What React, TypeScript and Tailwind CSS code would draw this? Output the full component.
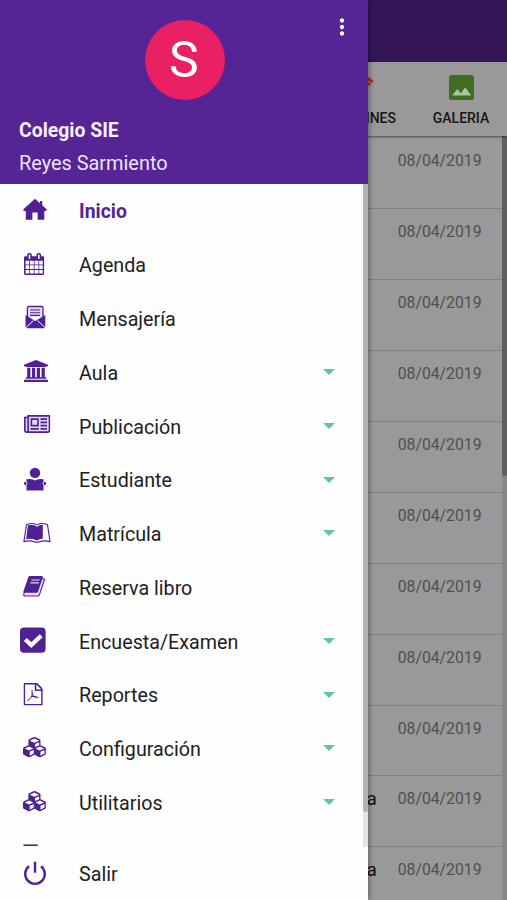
import type { ReactNode } from "react";
import { MdMoreVert } from "react-icons/md";

type IconName =
  | "home"
  | "calendar"
  | "mail"
  | "university"
  | "newspaper"
  | "reader"
  | "openBook"
  | "book"
  | "check"
  | "pdf"
  | "cubes"
  | "file"
  | "power";

type MenuEntry = {
  label: string;
  icon: IconName;
  active?: boolean;
  expandable?: boolean;
};

const menu: MenuEntry[] = [
  { label: "Inicio", icon: "home", active: true },
  { label: "Agenda", icon: "calendar" },
  { label: "Mensajería", icon: "mail" },
  { label: "Aula", icon: "university", expandable: true },
  { label: "Publicación", icon: "newspaper", expandable: true },
  { label: "Estudiante", icon: "reader", expandable: true },
  { label: "Matrícula", icon: "openBook", expandable: true },
  { label: "Reserva libro", icon: "book" },
  { label: "Encuesta/Examen", icon: "check", expandable: true },
  { label: "Reportes", icon: "pdf", expandable: true },
  { label: "Configuración", icon: "cubes", expandable: true },
  { label: "Utilitarios", icon: "cubes", expandable: true },
];

const news = [
  { date: "08/04/2019" },
  { date: "08/04/2019" },
  { date: "08/04/2019" },
  { date: "08/04/2019" },
  { date: "08/04/2019" },
  { date: "08/04/2019" },
  { date: "08/04/2019" },
  { date: "08/04/2019" },
  { date: "08/04/2019" },
  { date: "08/04/2019", tail: "a" },
  { date: "08/04/2019", tail: "a" },
];

const icons: Record<IconName, ReactNode> = {
  home: (
    <path d="M17 3.800l5 4.400V6h2.200v4.200l4.600 4.400-.6 1.400H26.300V24.800h-6.700v-7.300h-5.200v7.300H7.800V16H5.800l-.6-1.400z" />
  ),
  calendar: (
    <svg x="6" y="4" width="20.3" height="22" viewBox="64 0 1664 1792" preserveAspectRatio="none">
      <path d="M192 1664h288v-288h-288v288zm352 0h320v-288h-320v288zm-352-352h288v-320h-288v320zm352 0h320v-320h-320v320zm-352-384h288v-288h-288v288zm736 736h320v-288h-320v288zm-384-736h320v-288h-320v288zm768 736h288v-288h-288v288zm-384-352h320v-320h-320v320zm-352-864v-288q0-13-9.5-22.5t-22.5-9.5h-64q-13 0-22.5 9.5t-9.5 22.5v288q0 13 9.5 22.5t22.5 9.5h64q13 0 22.5-9.5t9.5-22.5zm736 864h288v-320h-288v320zm-384-384h320v-288h-320v288zm384 0h288v-288h-288v288zm32-480v-288q0-13-9.5-22.5t-22.5-9.5h-64q-13 0-22.5 9.5t-9.5 22.5v288q0 13 9.5 22.5t22.5 9.5h64q13 0 22.5-9.5t9.5-22.5zm384-64v1280q0 52-38 90t-90 38h-1408q-52 0-90-38t-38-90v-1280q0-52 38-90t90-38h128v-96q0-66 47-113t113-47h64q66 0 113 47t47 113v96h384v-96q0-66 47-113t113-47h64q66 0 113 47t47 113v96h128q52 0 90 38t38 90z" />
    </svg>
  ),
  mail: (
    <>
      <path d="M9.400 15V6q0-1.500 1.500-1.500h12.600q1.500 0 1.500 1.500v9" fill="#e4daf2" stroke="currentColor" strokeWidth="1.3" />
      <path d="M12 8h10M12 10.700h10M12 13.400h10" stroke="currentColor" strokeWidth="1.1" />
      <path d="M7.500 13l9.800 6 10-6V24.500q0 1.700-1.700 1.700H9.200q-1.700 0-1.700-1.700z" />
      <path d="M8 25.500l7.500-7M27 25.500l-7.500-7" fill="none" stroke="white" strokeWidth="1" />
    </>
  ),
  university: (
    <svg x="6" y="4" width="24" height="22" viewBox="0 0 1920 1792" preserveAspectRatio="none">
      <path d="M960 0l960 384v128h-128q0 26-20.5 45t-48.5 19h-1526q-28 0-48.5-19t-20.5-45h-128v-128zm-704 640h256v768h128v-768h256v768h128v-768h256v768h128v-768h256v768h59q28 0 48.5 19t20.5 45v64h-1664v-64q0-26 20.5-45t48.5-19h59v-768zm1595 960q28 0 48.5 19t20.5 45v128h-1920v-128q0-26 20.5-45t48.5-19h1782z" />
    </svg>
  ),
  newspaper: (
    <>
      <rect x="7" y="6" width="24.500" height="16" fill="#e4daf2" />
      <svg x="6" y="5" width="26.3" height="18" viewBox="0 256 2048 1408" preserveAspectRatio="none">
        <path d="M1024 640h-384v384h384v-384zm128 640v128h-640v-128h640zm0-768v640h-640v-640h640zm640 768v128h-512v-128h512zm0-256v128h-512v-128h512zm0-256v128h-512v-128h512zm0-256v128h-512v-128h512zm-1536 960v-960h-128v960q0 26 19 45t45 19 45-19 19-45zm1664 0v-1088h-1536v1088q0 33-11 64h1483q26 0 45-19t19-45zm128-1216v1216q0 80-56 136t-136 56h-1664q-80 0-136-56t-56-136v-1088h256v-128h1792z" />
      </svg>
    </>
  ),
  reader: (
    <>
      <circle cx="17" cy="8.900" r="5.200" />
      <path d="M8.500 15.200q4.500-.6 8.500 1.200 4-1.800 8.500-1.200v2.300q2.600 0 2.600 1.900t-2.600 2.100v5H8.500v-5q-2.600-.2-2.600-2.100t2.600-1.900z" />
      <path d="M8 17.300q2.200 2 0 4M26 17.300q-2.200 2 0 4" fill="none" stroke="white" strokeWidth=".9" />
    </>
  ),
  openBook: (
    <>
      <path d="M8.500 7.800q5.500-2.600 10.500 0 5-2.600 10.500 0l2.600 16.800q-6.600-1.600-11 .5h-4.200q-4.400-2.100-11-.5z" fill="white" stroke="currentColor" strokeWidth="1.100" strokeLinejoin="round" />
      <path d="M9.800 8.500q4.800-1.700 9.200.9 2.500-1.700 5.800-1.700v13.700q-3.500.2-5.800 2.100-4.600-2.400-10.800-1.300z" />
      <path d="M19 6.500v3.500" stroke="#d9cbea" strokeWidth=".7" />
    </>
  ),
  book: (
    <>
      <path d="M24.500 7.200l2 1.300-5 15.200q-.5 1.300-2 1.300H7.500q-2 0-2-2" fill="#e4daf2" stroke="currentColor" strokeWidth="1.100" strokeLinejoin="round" />
      <path d="M12 5h11.700q1.600 0 1.100 1.600l-4.700 14q-.4 1.200-1.700 1.200H7.600q-1.300 0-1.300 1.300-1.500-1-.9-2.700l4.800-14Q10.600 5 12 5z" />
      <path d="M13.400 9h8.300M12.500 11.800h8.300" stroke="#e9e0f4" strokeWidth="1.200" />
    </>
  ),
  check: (
    <>
      <rect x="2" y="2.600" width="25.600" height="25.200" rx="4" />
      <path d="M7.300 14.500l6 5.600 9.900-9.300" fill="none" stroke="white" strokeWidth="4.200" />
    </>
  ),
  pdf: (
    <>
      <svg x="5.500" y="4" width="19.300" height="22.500" viewBox="128 0 1536 1792" preserveAspectRatio="none">
        <path d="M1596 380q28 28 48 76t20 88v1152q0 40-28 68t-68 28h-1344q-40 0-68-28t-28-68v-1600q0-40 28-68t68-28h896q40 0 88 20t76 48zm-444-244v376h376q-10-29-22-41l-313-313q-12-12-41-22zm384 1528v-1024h-416q-40 0-68-28t-28-68v-416h-768v1536h1280z" />
      </svg>
      <path d="M14 11q.8 5.500-1 7.800l-3.800 3M13.200 17.500q4-.8 7.500 1.200M14 14q.5 3.500 4.500 5" fill="none" stroke="currentColor" strokeWidth="1" />
    </>
  ),
  cubes: (
    <svg x="5" y="5" width="24.200" height="20.500" viewBox="0 0 2304 1792" preserveAspectRatio="none">
      <path d="M640 1632l384-192v-314l-384 164v342zm-64-454l404-173-404-173-404 173zm1088 454l384-192v-314l-384 164v342zm-64-454l404-173-404-173-404 173zm-448-293l384-165v-266l-384 164v267zm-64-379l441-189-441-189-441 189zm1088 518v416q0 36-19 67t-52 47l-448 224q-25 14-57 14t-57-14l-448-224q-5-2-7-4-2 2-7 4l-448 224q-25 14-57 14t-57-14l-448-224q-33-16-52-47t-19-67v-416q0-38 21.5-70t56.5-48l434-186v-400q0-38 21.5-70t56.5-48l448-192q23-10 50-10t50 10l448 192q35 16 56.5 48t21.5 70v400l434 186q36 16 57 48t21 70z" />
    </svg>
  ),
  file: <path d="M5.500 5.200h14.300" fill="none" stroke="currentColor" strokeWidth="1.600" />,
  power: (
    <path d="M11 8.300a9.800 9.800 0 1 0 12 0M17 3.800v10.900" fill="none" stroke="currentColor" strokeWidth="2.400" />
  ),
};

function MenuIcon({ name }: { name: IconName }) {
  return (
    <svg className="h-8 w-9 shrink-0 text-[#4f2192]" viewBox="0 0 36 32" fill="currentColor">
      {icons[name]}
    </svg>
  );
}

function MenuRow({ label, icon, active, expandable }: MenuEntry) {
  return (
    <li className="flex h-[53.75px] shrink-0 items-center pr-7 pl-[18px]">
      <MenuIcon name={icon} />
      <span
        className={
          active
            ? "ml-[25px] pt-0.5 text-[19.4px] font-bold text-[#552494]"
            : "ml-[25px] pt-[3px] text-[19.7px] text-[#212121]"
        }
      >
        {label}
      </span>
      {expandable && (
        <svg className="mr-[5px] ml-auto h-1.5 w-3 text-[#5cc6a2]" viewBox="0 0 12 6" fill="currentColor">
          <path d="M0 0h12L6 6z" />
        </svg>
      )}
    </li>
  );
}

function Drawer() {
  return (
    <aside className="absolute inset-y-0 left-0 flex w-[368px] flex-col bg-[#fefefe] shadow-[1px_0_6px_rgba(0,0,0,0.4)]">
      <header className="relative flex h-[184px] shrink-0 flex-col bg-[#562595] px-[19px] pt-5 text-white">
        <div className="ml-[126px] flex size-[79.5px] items-center justify-center rounded-full bg-[#e92063] text-[50px] leading-none">
          <span className="-ml-0.5">S</span>
        </div>
        <MdMoreVert className="absolute top-[14px] right-[13px] size-[26px]" />
        <div className="mt-[19px] text-[19.4px] leading-6 font-bold text-[#f8effb]">Colegio SIE</div>
        <div className="mt-[9px] text-[19.9px] leading-6 text-[#eee0f7]">Reyes Sarmiento</div>
      </header>
      <div className="flex h-[663px] shrink-0 overflow-hidden">
        <ul className="flex flex-1 flex-col">
          {menu.map((entry) => (
            <MenuRow key={entry.label} {...entry} />
          ))}
          <li className="flex h-[53.75px] shrink-0 items-center pl-[18px]">
            <MenuIcon name="file" />
          </li>
        </ul>
        <div className="-ml-[5px] w-[5px] bg-[#e3e3e3]">
          <div className="h-[628px] rounded-b-sm bg-[#b3b3b3]" />
        </div>
      </div>
      <div className="flex flex-1 items-center pl-[18px]">
        <MenuIcon name="power" />
        <span className="ml-[25px] pt-[3px] text-[19.7px] text-[#212121]">Salir</span>
      </div>
    </aside>
  );
}

export default function App() {
  return (
    <div className="relative flex h-[900px] w-[507px] flex-col overflow-hidden bg-[#999999] font-['Roboto',sans-serif]">
      <div className="h-[62px] shrink-0 bg-[#341659]" />
      <nav className="z-0 flex h-[74px] shrink-0 justify-end bg-[#999999] text-sm font-medium text-[#161616] shadow-[0_1px_2px_rgba(0,0,0,0.5)]">
        <div className="flex w-[100px] flex-col items-end pt-[14px] pr-[19px]">
          <svg className="mr-5 h-6 w-3" viewBox="0 0 12 24">
            <path d="M1 3l4-2 4.500 4-4 5-4.500-3z" fill="#a52e25" />
            <path d="M3 4l4.500 4" stroke="#c7a09b" strokeWidth="1" />
          </svg>
          <span className="mt-2 leading-5">BOLETINES</span>
        </div>
        <div className="flex w-[92px] flex-col items-center pt-[13px]">
          <svg className="size-[25px]" viewBox="0 0 25 25">
            <rect width="25" height="25" rx="2.500" fill="#416d23" />
            <path d="M3.300 20.500l5-6.500 3.500 4.200 4.500-5.900 5.900 8.200z" fill="#a9c4a2" />
          </svg>
          <span className="mt-2 leading-5">GALERIA</span>
        </div>
      </nav>
      <main className="flex flex-1 overflow-hidden pt-0.5">
        <ul className="flex flex-1 flex-col">
          {news.map((item, i) => (
            <li
              key={i}
              className="flex h-[70.95px] shrink-0 justify-end border-b border-[#828282] pt-[13px] pr-[20.5px] text-base leading-5 text-[#505050]"
            >
              {item.tail && <span className="mr-[21px] text-[19px] text-[#111111]">{item.tail}</span>}
              <span className="text-[15.8px] tracking-[-0.03px]">{item.date}</span>
            </li>
          ))}
        </ul>
        <div className="-mt-0.5 w-[5px] bg-[#888888]">
          <div className="h-[340px] rounded-b-sm bg-[#5f5f5f]" />
        </div>
      </main>
      <Drawer />
    </div>
  );
}
